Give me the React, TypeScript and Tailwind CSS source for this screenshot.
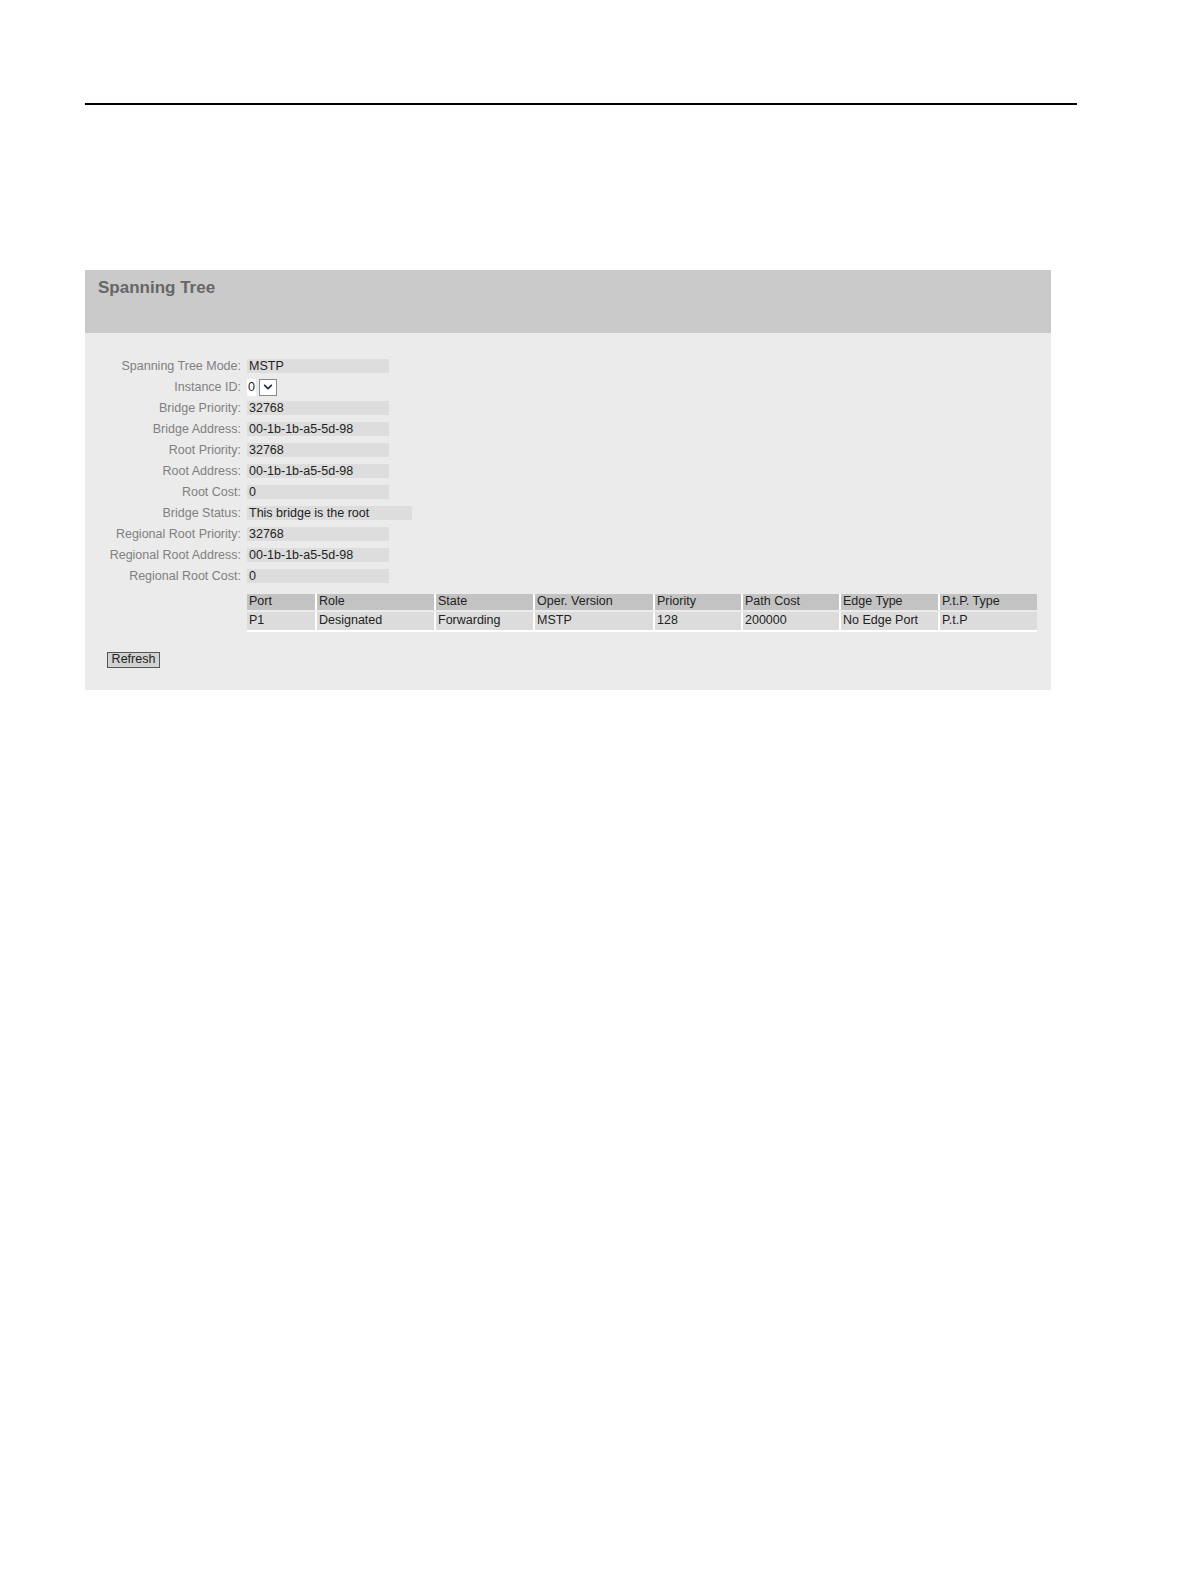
import { FaChevronDown } from 'react-icons/fa'

const rows: { label: string; value: string; wide?: boolean }[] = [
  { label: 'Spanning Tree Mode:', value: 'MSTP' },
  { label: 'Instance ID:', value: '0' },
  { label: 'Bridge Priority:', value: '32768' },
  { label: 'Bridge Address:', value: '00-1b-1b-a5-5d-98' },
  { label: 'Root Priority:', value: '32768' },
  { label: 'Root Address:', value: '00-1b-1b-a5-5d-98' },
  { label: 'Root Cost:', value: '0' },
  { label: 'Bridge Status:', value: 'This bridge is the root', wide: true },
  { label: 'Regional Root Priority:', value: '32768' },
  { label: 'Regional Root Address:', value: '00-1b-1b-a5-5d-98' },
  { label: 'Regional Root Cost:', value: '0' },
]

const columns = [
  { head: 'Port', cell: 'P1', w: 'w-[70px]' },
  { head: 'Role', cell: 'Designated', w: 'w-[119px]' },
  { head: 'State', cell: 'Forwarding', w: 'w-[99px]' },
  { head: 'Oper. Version', cell: 'MSTP', w: 'w-[120px]' },
  { head: 'Priority', cell: '128', w: 'w-[88px]' },
  { head: 'Path Cost', cell: '200000', w: 'w-[98px]' },
  { head: 'Edge Type', cell: 'No Edge Port', w: 'w-[99px]' },
  { head: 'P.t.P. Type', cell: 'P.t.P', w: 'w-[97px]' },
]

export default function App() {
  return (
    <div
      className="min-h-screen w-full bg-white pt-[103px]"
      style={{ fontFamily: '"Liberation Sans", Arial, sans-serif' }}
    >
      <div className="ml-[85px] h-[1.5px] w-[992px] bg-black" />

      <div className="ml-[85px] mt-[165px] w-[966px] bg-[#ebebeb]">
        <div className="h-[63px] bg-[#cacaca] px-[13px] pt-[8px]">
          <h1 className="text-[17px] font-bold leading-[20px] text-[#666666]">Spanning Tree</h1>
        </div>

        <div className="pb-[22px] pt-[23px]">
          <div className="flex flex-col">
            {rows.map((row) => (
              <div key={row.label} className="flex h-[21px] items-center text-[12.5px] leading-none">
                <div className="w-[156px] text-right text-[#808080]">{row.label}</div>
                <div className="w-[6px]" />
                {row.label === 'Instance ID:' ? (
                  <div className="flex items-center">
                    <span className="flex h-[17px] w-[9px] items-center justify-center bg-white text-[#222]">0</span>
                    <span className="ml-[3px] flex h-[17px] w-[18px] items-center justify-center border border-[#8a8a8a] bg-white">
                      <FaChevronDown className="text-[10px] text-[#1c2a3c]" />
                    </span>
                  </div>
                ) : (
                  <div
                    className={`flex h-[14px] items-center bg-[#dddddd] pl-[2px] text-[#222] ${
                      row.wide ? 'w-[165px]' : 'w-[142px]'
                    }`}
                  >
                    {row.value}
                  </div>
                )}
              </div>
            ))}
          </div>

          <div className="ml-[162px] mt-[7px] flex flex-col gap-[2px] text-[12.5px] leading-none text-[#222]">
            <div className="flex">
              {columns.map((c) => (
                <div
                  key={c.head}
                  className={`${c.w} flex h-[16px] items-center border-r-2 border-white bg-[#c3c3c3] pl-[2px] last:border-r-0`}
                >
                  {c.head}
                </div>
              ))}
            </div>
            <div className="flex">
              {columns.map((c) => (
                <div
                  key={c.head}
                  className={`${c.w} flex h-[20px] items-center border-r-2 border-b-2 border-white bg-[#dcdcdc] pl-[2px] last:border-r-0`}
                >
                  {c.cell}
                </div>
              ))}
            </div>
          </div>

          <div className="ml-[22px] mt-[20px]">
            <button className="flex h-[16px] w-[53px] items-center justify-center border border-[#555] bg-[#d2d2d2] text-[12.5px] leading-none text-[#222]">
              Refresh
            </button>
          </div>
        </div>
      </div>
    </div>
  )
}
